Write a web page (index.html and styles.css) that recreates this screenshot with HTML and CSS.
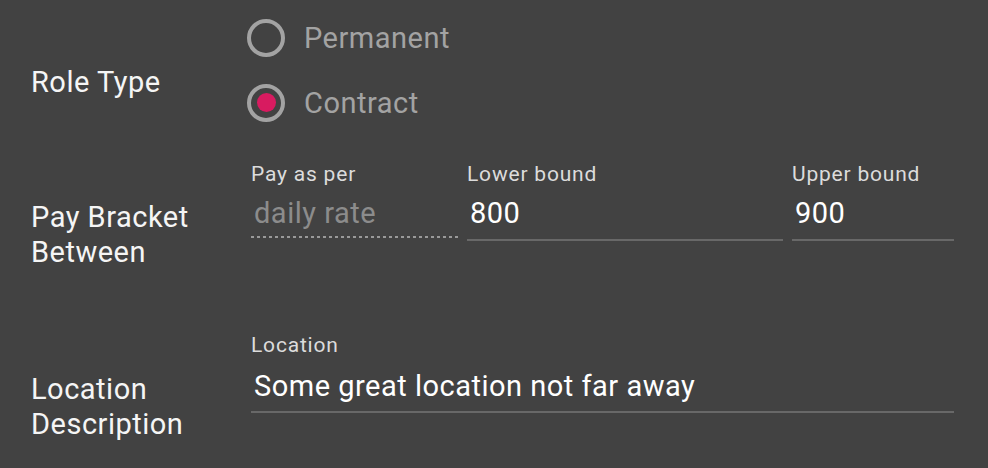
FILE: index.html
```html
<!DOCTYPE html>
<html>
<head>
<meta charset="utf-8">
<link rel="stylesheet" href="styles.css">
</head>
<body>
<div class="form">
  <section class="row row-role">
    <div class="row-label">Role Type</div>
    <div class="radio-group">
      <div class="radio"><span class="radio-ring"></span><span class="radio-text">Permanent</span></div>
      <div class="radio checked"><span class="radio-ring"><span class="radio-dot"></span></span><span class="radio-text">Contract</span></div>
    </div>
  </section>
  <section class="row row-pay">
    <div class="row-label">Pay Bracket<br>Between</div>
    <div class="fields">
      <div class="field">
        <div class="field-label">Pay as per</div>
        <div class="field-value placeholder">daily rate</div>
        <div class="underline dotted"></div>
      </div>
      <div class="field">
        <div class="field-label">Lower bound</div>
        <div class="field-value">800</div>
        <div class="underline"></div>
      </div>
      <div class="field">
        <div class="field-label">Upper bound</div>
        <div class="field-value">900</div>
        <div class="underline"></div>
      </div>
    </div>
  </section>
  <section class="row row-location">
    <div class="row-label">Location<br>Description</div>
    <div class="fields single">
      <div class="field">
        <div class="field-label">Location</div>
        <div class="field-value">Some great location not far away</div>
        <div class="underline"></div>
      </div>
    </div>
  </section>
</div>
</body>
</html>
```
FILE: styles.css
```css
html, body {
  margin: 0;
  padding: 0;
}
body {
  background: #424242;
  width: 988px;
  height: 468px;
  overflow: hidden;
  font-family: Roboto, "Liberation Sans", sans-serif;
  color: #f5f5f5;
}
.form {
  display: flex;
  flex-direction: column;
  padding: 0 34px 0 31px;
}
.row {
  display: grid;
  grid-template-columns: 220px 1fr;
  align-items: start;
}
.row-label {
  font-size: 29px;
  line-height: 35px;
  letter-spacing: 0.5px;
  color: #f5f5f5;
}
.row-role {
  height: 140px;
}
.row-role .row-label {
  margin-top: 65px;
}
.radio-group {
  display: flex;
  flex-direction: column;
  padding-top: 5px;
  margin-left: -4px;
}
.radio {
  display: flex;
  align-items: center;
  height: 65px;
}
.radio-ring {
  box-sizing: border-box;
  width: 38px;
  height: 38px;
  border: 4px solid #a3a3a3;
  border-radius: 50%;
  display: flex;
  align-items: center;
  justify-content: center;
  flex-shrink: 0;
}
.radio-dot {
  width: 19px;
  height: 19px;
  border-radius: 50%;
  background: #d81b60;
}
.radio-text {
  margin-left: 19px;
  font-size: 29px;
  letter-spacing: 0.5px;
  color: #a3a3a3;
}
.row-pay {
  height: 190px;
}
.row-pay .row-label {
  margin-top: 60px;
}
.fields {
  display: grid;
  grid-template-columns: 207px 316px 162px;
  column-gap: 9px;
  padding-top: 22px;
}
.fields.single {
  grid-template-columns: 703px;
  padding-top: 3px;
}
.row-location .row-label {
  margin-top: 42px;
}
.field {
  display: flex;
  flex-direction: column;
}
.field-label {
  font-size: 21px;
  line-height: 24px;
  letter-spacing: 0.8px;
  color: #dcdcdc;
}
.field-value {
  margin-top: 7px;
  padding-left: 3px;
  font-size: 29px;
  line-height: 40px;
  letter-spacing: 0.5px;
  color: #ffffff;
}
.field-value.placeholder {
  color: #8c8c8c;
}
.underline {
  margin-top: 6px;
  height: 2px;
  background: #686868;
}
.underline.dotted {
  margin-top: 3px;
  background: repeating-linear-gradient(to right, #9a9a9a 0 3px, transparent 3px 6px);
}
.single .field-value {
  margin-top: 9px;
}
.single .underline {
  margin-top: 5px;
}
```
